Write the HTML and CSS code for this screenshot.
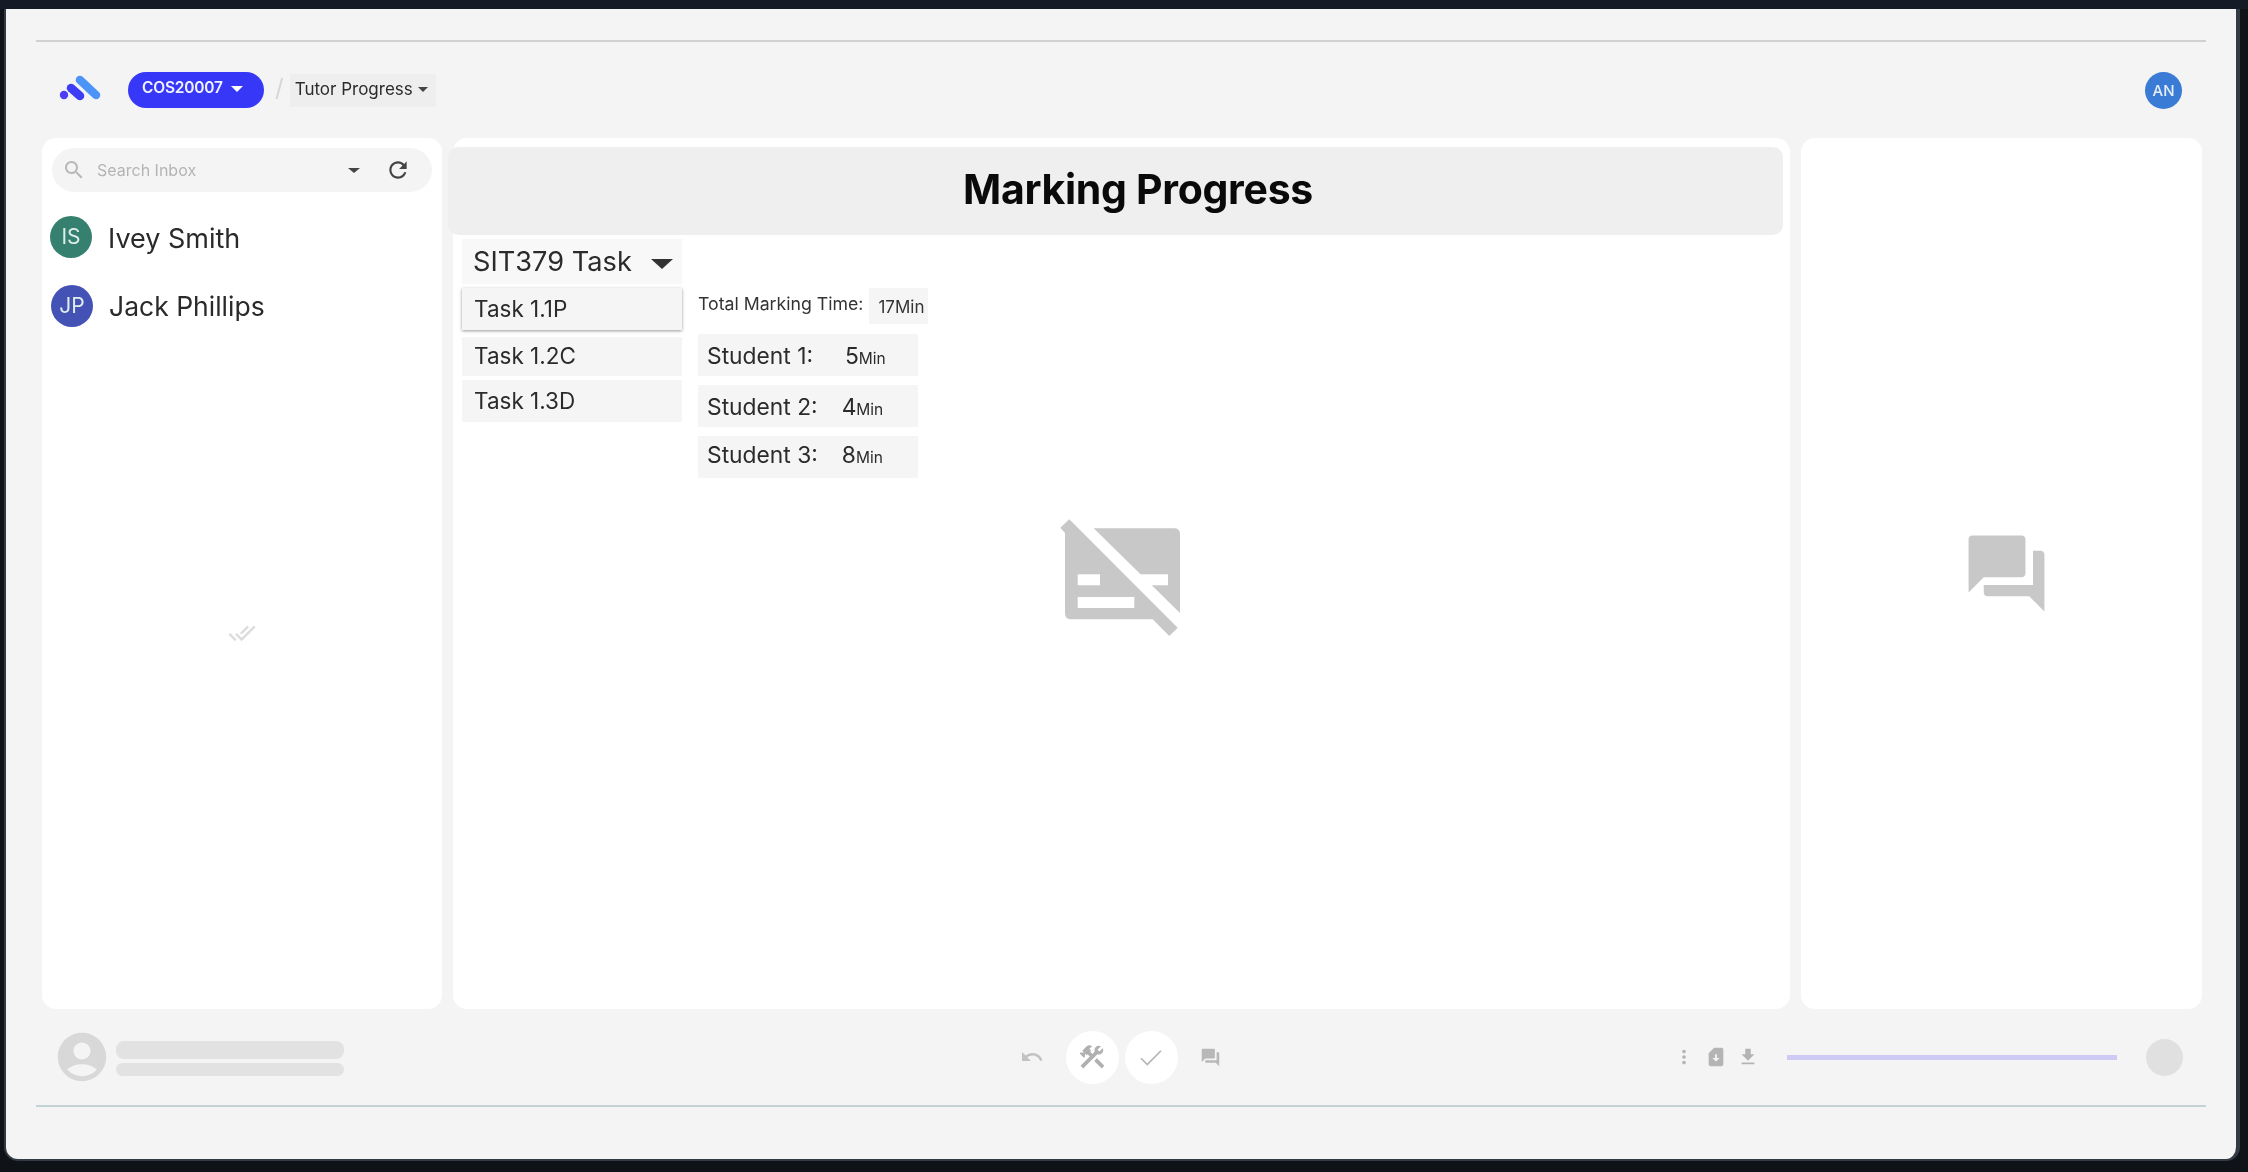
FILE: index.html
```html
<!DOCTYPE html>
<html lang="en">
<head>
  <meta charset="UTF-8" />
  <title>Marking Progress</title>
  <link rel="stylesheet" href="styles.css">
</head>
<body>
  <div class="frame">
    <div class="rule rule-top"></div>

    <header class="topbar">
      <svg class="logo" viewBox="0 0 44 30" aria-hidden="true">
        <circle cx="6" cy="22" r="4.2" fill="#4f3df5"/>
        <line x1="13" y1="15" x2="22" y2="23" stroke="#3d3df5" stroke-width="8.5" stroke-linecap="round"/>
        <line x1="22" y1="7" x2="38" y2="22" stroke="#4d94f8" stroke-width="8.5" stroke-linecap="round"/>
      </svg>
      <div class="unit-pill">COS20007 <span class="caret caret-white"></span></div>
      <span class="crumb-slash">/</span>
      <div class="crumb">Tutor Progress <span class="caret caret-dark"></span></div>
      <div class="user-badge">AN</div>
    </header>

    <main class="panels">
      <aside class="panel inbox">
        <div class="search">
          <svg class="search-icon" viewBox="0 0 24 24"><path d="M15.5 14h-.79l-.28-.27C15.41 12.59 16 11.11 16 9.5 16 5.91 13.09 3 9.5 3S3 5.91 3 9.5 5.91 16 9.5 16c1.61 0 3.09-.59 4.23-1.57l.27.28v.79l5 4.99L20.49 19l-4.99-5zm-6 0C7.01 14 5 11.99 5 9.5S7.01 5 9.5 5 14 7.01 14 9.5 11.99 14 9.5 14z"/></svg>
          <span class="search-text">Search Inbox</span>
          <span class="caret caret-search"></span>
          <svg class="refresh-icon" viewBox="0 0 24 24"><path d="M17.65 6.35C16.2 4.9 14.21 4 12 4c-4.42 0-7.99 3.58-7.99 8s3.57 8 7.99 8c3.73 0 6.84-2.55 7.73-6h-2.08c-.82 2.33-3.04 4-5.65 4-3.31 0-6-2.69-6-6s2.69-6 6-6c1.66 0 3.14.69 4.22 1.78L13 11h7V4l-2.35 2.35z"/></svg>
        </div>
        <div class="person">
          <div class="avatar avatar-green">IS</div>
          <span class="person-name">Ivey Smith</span>
        </div>
        <div class="person">
          <div class="avatar avatar-indigo">JP</div>
          <span class="person-name">Jack Phillips</span>
        </div>
        <svg class="done-icon" viewBox="0 0 24 24"><path d="M18 7l-1.41-1.41-6.34 6.34 1.41 1.41L18 7zm4.24-1.41L11.66 16.17 7.48 12l-1.41 1.41L11.66 19l12-12-1.42-1.41zM.41 13.41L6 19l1.41-1.41L1.83 12 .41 13.41z"/></svg>
      </aside>

      <section class="panel progress">
        <h1 class="title-band">Marking Progress</h1>
        <div class="progress-body">
          <div class="task-col">
            <div class="task-select">SIT379 Task <span class="caret caret-select"></span></div>
            <div class="task task-active">Task 1.1P</div>
            <div class="task task-second">Task 1.2C</div>
            <div class="task task-third">Task 1.3D</div>
          </div>
          <div class="time-col">
            <div class="total-row">
              <span class="total-label">Total Marking Time:</span>
              <span class="total-value">17Min</span>
            </div>
            <div class="student-row"><span>Student 1:</span><span class="mins mins-wide">5<small>Min</small></span></div>
            <div class="student-row"><span>Student 2:</span><span class="mins">4<small>Min</small></span></div>
            <div class="student-row"><span>Student 3:</span><span class="mins">8<small>Min</small></span></div>
          </div>
        </div>
        <svg class="empty-icon" viewBox="59 28 121 117" aria-hidden="true">
          <path d="M59.3 36.7L68.3 28.3L176.7 136.7L168.3 145L151.7 128.3H70Q64 128.3 64 122V42Z"/>
          <path d="M92.7 37.3H173Q179 37.3 179 43V122Z"/>
          <rect x="76.7" y="83.3" width="22.3" height="11" fill="#fff"/>
          <rect x="76.7" y="106" width="56.6" height="11" fill="#fff"/>
          <rect x="136.7" y="83.3" width="30.3" height="11" fill="#fff"/>
        </svg>
      </section>

      <aside class="panel notes">
        <svg class="forum-icon" viewBox="0 0 24 24"><path d="M21 6h-2v9H6v2c0 .55.45 1 1 1h11l4 4V7c0-.55-.45-1-1-1zm-4 6V3c0-.55-.45-1-1-1H3c-.55 0-1 .45-1 1v14l4-4h10c.55 0 1-.45 1-1z"/></svg>
      </aside>
    </main>

    <footer class="statusbar">
      <div class="status-left">
        <svg class="account-icon" viewBox="0 0 24 24"><path d="M12 2C6.48 2 2 6.48 2 12s4.48 10 10 10 10-4.48 10-10S17.52 2 12 2zm0 4c1.93 0 3.5 1.57 3.5 3.5S13.93 13 12 13s-3.5-1.57-3.5-3.5S10.07 6 12 6zm0 14c-2.03 0-4.43-.82-6.14-2.88C7.55 15.8 9.68 15 12 15s4.45.8 6.14 2.12C16.43 19.18 14.03 20 12 20z"/></svg>
        <div class="skeleton">
          <div class="bar bar-big"></div>
          <div class="bar bar-small"></div>
        </div>
      </div>
      <div class="status-mid">
        <svg class="tool-icon" viewBox="0 0 24 24"><path d="M12.5 8c-2.65 0-5.05.99-6.9 2.6L2 7v9h9l-3.62-3.62c1.39-1.16 3.16-1.88 5.12-1.88 3.54 0 6.55 2.31 7.6 5.5l2.37-.78C21.08 11.03 17.15 8 12.5 8z"/></svg>
        <div class="round-btn">
          <svg class="round-icon" viewBox="0 0 24 24"><path d="M13.783 15.172l2.121-2.121 5.996 5.996-2.121 2.121zM17.5 10c1.93 0 3.5-1.57 3.5-3.5 0-.58-.16-1.12-.41-1.6l-2.7 2.7-1.49-1.49 2.7-2.7c-.48-.25-1.02-.41-1.6-.41C15.57 3 14 4.57 14 6.5c0 .41.08.8.21 1.16l-1.85 1.85-1.78-1.78.71-.71-1.41-1.41L12 3.49c-1.17-1.17-3.07-1.17-4.24 0L4.22 7.03l1.41 1.41H2.81l-.71.71 3.54 3.54.71-.71V9.15l1.41 1.41.71-.71 1.78 1.78-7.41 7.41 2.12 2.12L16.34 9.79c.36.13.75.21 1.16.21z"/></svg>
        </div>
        <div class="round-btn">
          <svg class="round-icon" viewBox="0 0 24 24"><path d="M4 13l5 5L20 7" fill="none" stroke="#b5b5b5" stroke-width="1.4"/></svg>
        </div>
        <svg class="tool-icon tool-forum" viewBox="0 0 24 24"><path d="M21 6h-2v9H6v2c0 .55.45 1 1 1h11l4 4V7c0-.55-.45-1-1-1zm-4 6V3c0-.55-.45-1-1-1H3c-.55 0-1 .45-1 1v14l4-4h10c.55 0 1-.45 1-1z"/></svg>
      </div>
      <div class="status-right">
        <svg class="mini-icon" viewBox="0 0 24 24"><path d="M12 8c1.1 0 2-.9 2-2s-.9-2-2-2-2 .9-2 2 .9 2 2 2zm0 2c-1.1 0-2 .9-2 2s.9 2 2 2 2-.9 2-2-.9-2-2-2zm0 6c-1.1 0-2 .9-2 2s.9 2 2 2 2-.9 2-2-.9-2-2-2z"/></svg>
        <svg class="mini-icon" viewBox="0 0 24 24"><path d="M18 2h-8L4 8v12c0 1.1.9 2 2 2h12c1.1 0 2-.9 2-2V4c0-1.1-.9-2-2-2zm-6 15-4-4h3V9.02L13 9v4h3l-4 4z"/></svg>
        <svg class="mini-icon" viewBox="0 0 24 24"><path d="M5 20h14v-2H5v2zM19 9h-4V3H9v6H5l7 7 7-7z"/></svg>
        <div class="slider"></div>
        <div class="status-dot"></div>
      </div>
    </footer>

    <div class="rule rule-bottom"></div>
  </div>
</body>
</html>
```

FILE: styles.css
```css
:root {
  --frame: #f4f4f4;
  --icon: #c8c8c8;
  --text: #2b2b2b;
}
html, body {
  margin: 0;
  height: 100%;
}
body {
  background: #0f1318;
  box-shadow: inset 0 9px 0 #151b26;
  padding: 9px 8px 11px 4px;
  box-sizing: border-box;
  font-family: Inter, "Liberation Sans", sans-serif;
  color: var(--text);
  overflow: hidden;
}
.frame {
  height: 1152px;
  box-sizing: border-box;
  background: var(--frame);
  border-left: 2px solid #333a44;
  border-right: 4px solid #333a44;
  border-bottom: 2px solid #333a44;
  border-radius: 0 0 14px 14px;
  padding: 31px 30px 0 30px;
  filter: blur(0.7px);
}
.rule {
  height: 2px;
  background: #cfd0d0;
}
.rule-bottom {
  background: #c3d2d6;
}

/* top bar */
.topbar {
  display: flex;
  align-items: center;
  height: 36px;
  margin-top: 30px;
  padding-left: 22px;
}
.logo {
  width: 44px;
  height: 30px;
  margin-bottom: 4px;
}
.unit-pill {
  margin-left: 26px;
  width: 136px;
  height: 36px;
  box-sizing: border-box;
  padding-left: 14px;
  border-radius: 18px;
  background: #3737f7;
  color: #f0f2ff;
  font-size: 15.5px;
  font-weight: 600;
  line-height: 32px;
  letter-spacing: -0.2px;
}
.crumb-slash {
  margin-left: 11px;
  color: #d6d6d6;
  font-size: 24px;
  line-height: 24px;
  margin-bottom: 4px;
}
.crumb {
  margin-left: 6px;
  padding: 0 5px;
  width: 146px;
  height: 33px;
  box-sizing: border-box;
  background: #eeeeee;
  font-size: 17px;
  line-height: 31px;
  white-space: nowrap;
}
.user-badge {
  margin-left: auto;
  margin-right: 24px;
  width: 37px;
  height: 37px;
  border-radius: 50%;
  background: #3a7bd5;
  color: #e6eefa;
  font-size: 15px;
  font-weight: 500;
  line-height: 37px;
  text-align: center;
}
.caret {
  display: inline-block;
  width: 0;
  height: 0;
  border-style: solid;
  border-color: transparent;
  vertical-align: middle;
}
.caret-white {
  margin-left: 5px;
  border-width: 6px 6px 0;
  border-top-color: #fff;
}
.caret-dark {
  border-width: 5px 5px 0;
  border-top-color: #444;
}
.caret-search {
  border-width: 5px 6px 0;
  border-top-color: #444;
  margin-left: auto;
}
.caret-select {
  margin-left: 12px;
  border-width: 10px 11px 0;
  border-top-color: #333;
}

/* three columns */
.panels {
  display: grid;
  grid-template-columns: 400px 1337px 401px;
  gap: 11px;
  height: 871px;
  margin-top: 30px;
  padding-left: 6px;
}
.panel {
  background: #fff;
  border-radius: 14px;
}

/* inbox */
.inbox {
  display: flex;
  flex-direction: column;
  padding: 10px;
  box-sizing: border-box;
}
.search {
  display: flex;
  align-items: center;
  height: 44px;
  padding: 0 21px 0 10px;
  border-radius: 22px;
  background: #f4f4f4;
  flex: none;
}
.search-icon {
  width: 24px;
  height: 24px;
  fill: #b8b8b8;
}
.search-text {
  margin-left: 11px;
  color: #b4b4b4;
  font-size: 16px;
}
.refresh-icon {
  width: 26px;
  height: 26px;
  margin-left: 25px;
  fill: #444;
}
.person {
  display: flex;
  align-items: center;
  gap: 16px;
  margin-left: -2px;
  height: 42px;
  margin-top: 24px;
  font-size: 27px;
}
.person + .person {
  margin-top: 27px;
}
.person-name {
  color: #2a2a2a;
  padding-top: 2px;
}
.person + .person .person-name {
  font-size: 26.5px;
  padding-top: 0;
}
.avatar {
  width: 42px;
  height: 42px;
  border-radius: 50%;
  color: #dfeeea;
  font-size: 21px;
  line-height: 42px;
  text-align: center;
  flex: none;
}
.avatar-green {
  background: #35806f;
}
.avatar-indigo {
  background: #4552b5;
  margin-left: 1px;
}
.done-icon {
  width: 28px;
  height: 28px;
  fill: #dcdcdc;
  align-self: center;
  margin-top: 292px;
}

/* centre */
.progress {
  display: flex;
  flex-direction: column;
  padding-top: 9px;
}
.title-band {
  margin: 0 7px 0 -5px;
  padding-left: 45px;
  height: 88px;
  border-radius: 10px;
  background: #efefef;
  color: #0a0a0a;
  font-size: 41px;
  font-weight: 700;
  line-height: 84px;
  text-align: center;
  letter-spacing: -0.3px;
  flex: none;
}
.progress-body {
  display: flex;
  gap: 16px;
  padding: 4px 0 0 9px;
  flex: none;
}
.task-col {
  width: 220px;
}
.task-select {
  height: 45px;
  box-sizing: border-box;
  padding-left: 11px;
  background: #f8f8f8;
  font-size: 27.2px;
  line-height: 45px;
  white-space: nowrap;
}
.task {
  padding-left: 12px;
  background: #f5f5f5;
  font-size: 22.5px;
}
.task-active {
  margin-top: 4px;
  height: 42px;
  line-height: 42px;
  box-shadow: 0 1px 3px rgba(0, 0, 0, 0.4);
}
.task-second {
  margin-top: 7px;
  height: 39px;
  line-height: 38px;
}
.task-third {
  margin-top: 4px;
  height: 42px;
  line-height: 41px;
}
.time-col {
  margin-top: 49px;
  display: flex;
  flex-direction: column;
  gap: 9px;
}
.total-row {
  display: flex;
  align-items: flex-start;
  height: 36px;
  margin-bottom: 1px;
  font-size: 17.7px;
  color: #333;
}
.total-label {
  line-height: 32px;
  white-space: nowrap;
}
.total-value {
  margin-left: 6px;
  width: 59px;
  height: 36px;
  box-sizing: border-box;
  padding-left: 9px;
  background: #f5f5f5;
  font-size: 17px;
  line-height: 38px;
}
.student-row {
  display: flex;
  align-items: center;
  gap: 24px;
  width: 220px;
  height: 42px;
  box-sizing: border-box;
  padding-left: 9px;
  background: #f5f5f5;
  font-size: 22.8px;
}
.student-row:last-child {
  padding-bottom: 6px;
}
.mins small {
  font-size: 15.5px;
}
.mins-wide {
  margin-left: 8px;
}
.empty-icon {
  width: 121px;
  height: 117px;
  fill: var(--icon);
  align-self: center;
  margin: 41px 2px 0 0;
}

/* right */
.notes {
  display: flex;
  justify-content: center;
  padding: 390px 0 0 10px;
  box-sizing: border-box;
}
.forum-icon {
  width: 91px;
  height: 91px;
  fill: var(--icon);
}

/* bottom bar */
.statusbar {
  display: grid;
  grid-template-columns: 1fr auto 1fr;
  align-items: center;
  height: 96px;
  padding: 0 23px 0 17px;
}
.status-left {
  display: flex;
  align-items: center;
  gap: 5px;
}
.account-icon {
  width: 58px;
  height: 58px;
  fill: #d8d8d8;
}
.skeleton {
  display: flex;
  flex-direction: column;
  gap: 4px;
  margin-top: 2px;
}
.bar {
  width: 228px;
  border-radius: 8px;
  background: #e2e2e2;
}
.bar-big {
  height: 18px;
}
.bar-small {
  height: 13px;
}
.status-mid {
  display: flex;
  align-items: center;
  gap: 6px;
  margin-left: 4px;
}
.tool-icon {
  width: 24px;
  height: 24px;
  fill: #c2c2c2;
  margin-right: 16px;
}
.tool-forum {
  width: 21px;
  height: 21px;
  margin: 0 0 0 16px;
  fill: #b8b8b8;
}
.round-btn {
  width: 53px;
  height: 53px;
  border-radius: 50%;
  background: #fff;
  display: flex;
  align-items: center;
  justify-content: center;
}
.round-icon {
  width: 30px;
  height: 30px;
  fill: #b0b0b0;
}
.status-right {
  display: flex;
  align-items: center;
  justify-content: flex-end;
  gap: 10px;
}
.mini-icon {
  width: 22px;
  height: 22px;
  fill: #b4b4b4;
}
.slider {
  width: 330px;
  height: 5px;
  margin-left: 18px;
  background: #cfcaf5;
}
.status-dot {
  width: 37px;
  height: 37px;
  margin-left: 19px;
  border-radius: 50%;
  background: #e0e0e0;
}
```
